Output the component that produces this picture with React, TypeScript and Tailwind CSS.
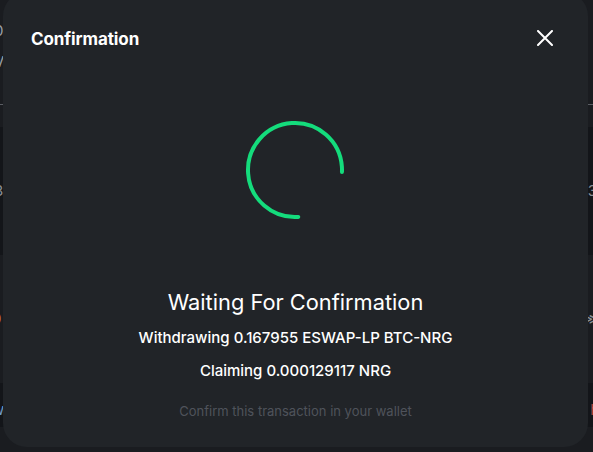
import React from "react";

export default function App() {
  const r = 47;
  const circ = 2 * Math.PI * r;
  const arc = (276 / 360) * circ;
  return (
    <div className="relative w-[593px] h-[452px] overflow-hidden bg-[#1a1c20] font-['Inter',sans-serif]">
      {/* background page */}
      <div className="flex flex-col h-full">
        <div className="h-[104px] flex justify-between px-0 pt-[20px] text-[#9aa0a8] text-[15px]">
          <div className="flex flex-col gap-[8px] -ml-[6px]">
            <span>0</span>
            <span>V</span>
          </div>
          <span />
        </div>
        <div className="h-px bg-[#5a5d63]" />
        <div className="h-[22px]" />
        <div className="h-[128px] bg-[#131519] flex items-center justify-between text-[#8a8f96] text-[15px]">
          <span className="-ml-[6px]">8</span>
          <span className="-mr-[4px]">3</span>
        </div>
        <div className="h-[128px] flex items-center justify-between text-[15px]">
          <span className="-ml-[8px] text-[#c0763a]">0</span>
          <span className="-mr-[6px] text-[#8a8f96]">≫</span>
        </div>
        <div className="h-[44px] bg-[#131519] flex items-end pb-[6px] justify-between text-[15px]">
          <span className="-ml-[8px] text-[#6b9bd0]">w</span>
          <span className="-mr-[6px] text-[#b04848]">h</span>
        </div>
        <div className="flex-1" />
      </div>

      {/* modal */}
      <div className="absolute left-[3px] top-[-8px] w-[585px] h-[455px] rounded-[24px] bg-[#212428] flex flex-col items-center">
        <div className="w-full h-[24px] mt-[35px] flex items-center justify-between pl-[28px] pr-[35px]">
          <span className="text-[17px] leading-[24px] font-bold text-white tracking-[-0.1px]">Confirmation</span>
          <svg width="16" height="16" viewBox="0 0 16 16" className="-mt-[3px]">
            <path d="M1 1 L15 15 M15 1 L1 15" stroke="white" strokeWidth="2" strokeLinecap="round" />
          </svg>
        </div>
        <svg width="100" height="100" viewBox="0 0 100 100" className="mt-[69px] -ml-[2px]">
          <circle
            cx="50"
            cy="50"
            r={r}
            fill="none"
            stroke="#14dc7c"
            strokeWidth="4"
            strokeLinecap="round"
            strokeDasharray={`${arc} ${circ}`}
            transform="rotate(86 50 50)"
          />
        </svg>
        <div className="mt-[68px] text-[21.8px] leading-[28px] text-white">Waiting For Confirmation</div>
        <div className="mt-[12px] text-[15px] leading-[20px] font-medium text-white">
          Withdrawing 0.167955 ESWAP-LP BTC-NRG
        </div>
        <div className="mt-[13px] text-[15px] leading-[20px] font-medium text-white">Claiming 0.000129117 NRG</div>
        <div className="mt-[20px] text-[13px] leading-[20px] text-[#4f535b]">Confirm this transaction in your wallet</div>
      </div>
    </div>
  );
}
